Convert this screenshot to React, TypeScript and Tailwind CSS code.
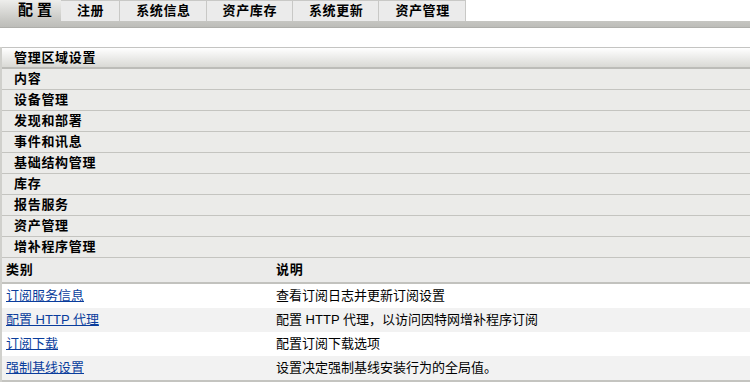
import React from "react";

const tabs = ["注册", "系统信息", "资产库存", "系统更新", "资产管理"];
const sections = ["内容", "设备管理", "发现和部署", "事件和讯息", "基础结构管理", "库存", "报告服务", "资产管理", "增补程序管理"];
const rows = [
  ["订阅服务信息", "查看订阅日志并更新订阅设置"],
  ["配置 HTTP 代理", "配置 HTTP 代理，以访问因特网增补程序订阅"],
  ["订阅下载", "配置订阅下载选项"],
  ["强制基线设置", "设置决定强制基线安装行为的全局值。"],
];

export default function App() {
  return (
    <div
      className="w-[750px] h-[383px] overflow-hidden bg-white text-black"
      style={{ fontFamily: '"Liberation Sans", "Noto Sans CJK SC", sans-serif' }}
    >
      {/* tab bar */}
      <div className="flex h-[21px]">
        <div className="w-[61px] h-[21px] flex items-center pl-[18px] bg-gradient-to-b from-[#eeeeec] to-[#c6c6c2] text-[15px] font-bold tracking-[4px]">
          配置
        </div>
        {tabs.map((t) => (
          <div
            key={t}
            className="h-[21px] flex items-center pl-[16px] pr-[15px] bg-[#ebebeb] border-t border-r border-[#c8c8c6] text-[13px] font-bold tracking-[0.6px]"
          >
            {t}
          </div>
        ))}
      </div>
      <div className="h-[7px] bg-gradient-to-b from-[#c6c6c2] to-[#bdbdb9] border-b border-[#aeaeaa]" />
      <div className="h-[19px]" />

      {/* sections */}
      <div className="border-l-2 border-[#d0d0cc]">
        <div className="h-[22px] border-t border-b-2 border-t-[#c4c4c2] border-b-[#bcbcb8] bg-gradient-to-b from-[#ffffff] to-[#d9d9d5] flex items-center pl-[12px] text-[13px] font-bold tracking-[0.7px]">
          管理区域设置
        </div>
        {sections.map((s) => (
          <div
            key={s}
            className="h-[21px] bg-[#ebebe9] border-b border-[#c4c4c0] flex items-center pl-[12px] text-[13px] font-bold tracking-[0.7px]"
          >
            {s}
          </div>
        ))}
        <div className="h-[26px] bg-[#ebebea] border-b-2 border-[#c2c2be] flex items-center text-[13px] font-bold tracking-[0.7px]">
          <div className="w-[274px] pl-[4px]">类别</div>
          <div>说明</div>
        </div>
        {rows.map(([a, b], i) => (
          <div
            key={a}
            className={`h-[24px] flex items-center text-[13px] ${i % 2 === 1 ? "bg-[#f2f2f2]" : "bg-white"}`}
          >
            <div className="w-[274px] pl-[4px]">
              <a href="#" className="text-[#0a3d9c] underline">
                {a}
              </a>
            </div>
            <div>{b}</div>
          </div>
        ))}
        <div className="h-[2px] bg-[#c4c4c0]" />
      </div>
    </div>
  );
}
